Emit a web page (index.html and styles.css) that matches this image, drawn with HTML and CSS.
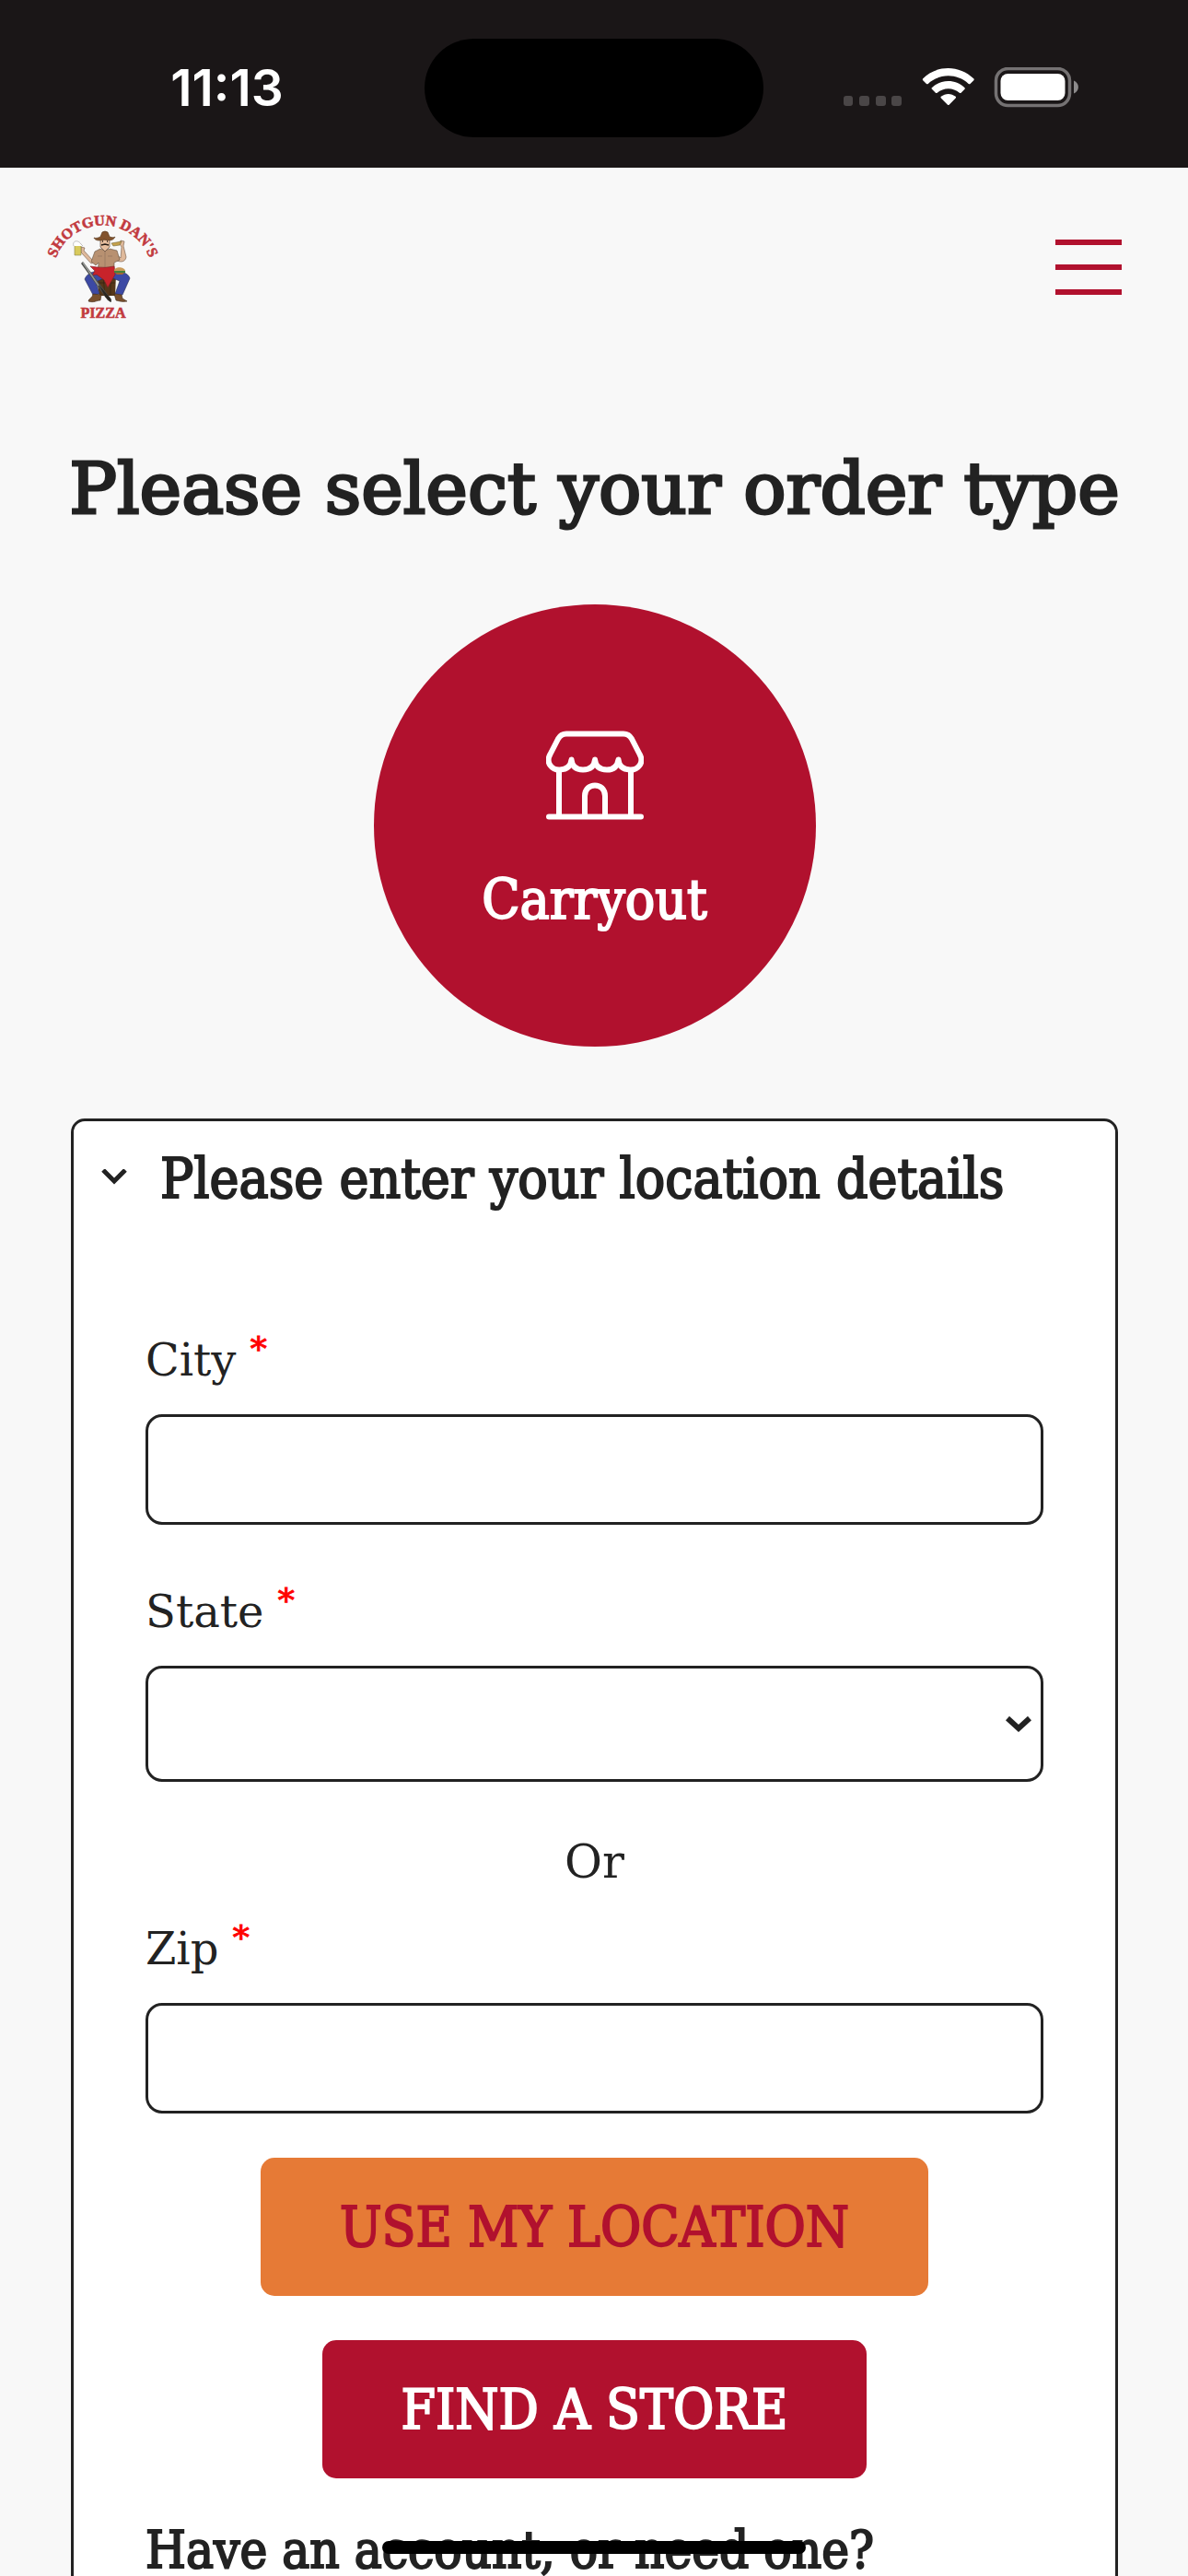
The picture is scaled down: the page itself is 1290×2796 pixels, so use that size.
FILE: index.html
```html
<!DOCTYPE html>
<html lang="en">
<head>
  <meta charset="UTF-8">
  <meta name="viewport" content="width=device-width, initial-scale=1.0">
  <title>Shotgun Dan's Pizza</title>
  <link rel="stylesheet" href="styles.css">
</head>
<body>
  <!-- Status bar -->
  <div class="status-bar">
    <span class="status-time">11:13</span>
    <span class="island"></span>
    <svg class="status-icons" width="256" height="44" viewBox="0 0 256 44" aria-hidden="true">
      <g fill="#4a4647">
        <rect x="0" y="31" width="10" height="11" rx="3"/>
        <rect x="17" y="31" width="11" height="11" rx="3"/>
        <rect x="35" y="31" width="11" height="11" rx="3"/>
        <rect x="52" y="31" width="11" height="11" rx="3"/>
      </g>
      <g fill="#fff">
        <path d="M86 12.500C101 -3 126 -3 141.500 12.500Q142 13.500 141.300 14.200L137.500 18Q136.600 18.600 135.700 17.900C123 6.500 104.500 6.500 91.800 17.900Q90.900 18.600 90 18L86.200 14.200Q85.500 13.500 86 12.500Z"/>
        <path d="M95.800 22.200C106 12.500 121.500 12.500 131.500 22.200Q132.200 23 131.500 23.800L127.600 27.700Q126.700 28.400 125.800 27.700C119 21.600 108.500 21.600 101.700 27.700Q100.800 28.400 99.900 27.700L96 23.800Q95.200 23 95.800 22.200Z"/>
        <path d="M105.800 31.800C110.500 27.900 117 27.900 121.700 31.800Q122.500 32.600 121.700 33.400L114.600 40.700Q113.800 41.400 113 40.700L105.800 33.400Q105 32.600 105.800 31.800Z"/>
      </g>
      <rect x="165.500" y="1.500" width="80" height="40" rx="13" fill="none" stroke="#757273" stroke-width="3.500"/>
      <rect x="170.500" y="7" width="70" height="29" rx="8" fill="#fff"/>
      <path d="M250 14.500C256.500 17 256.500 26 250 28.500Z" fill="#8c8a8b"/>
    </svg>
  </div>

  <!-- Site header -->
  <header class="site-header">
    <a class="logo" href="#" aria-label="Shotgun Dan's Pizza">
      <svg width="160" height="160" viewBox="0 0 160 160" stroke-width="0.6">
        <path id="logo-arc" d="M29.500 74A54 54 0 0 1 133.500 74" fill="none"/>
        <text class="logo-text" text-anchor="middle"><textPath href="#logo-arc" startOffset="50%">SHOTGUN DAN'S</textPath></text>
        <!-- barrel -->
        <path d="M74 88h22l-1 23H78z" fill="#553719"/>
        <path d="M82 90l2 21M90 90v21M75 97h20" stroke="#302010" fill="none"/>
        <!-- legs and boots -->
        <path d="M77 84c-9 1-13 4-15 9l9 17 7-1-4-13 11-5z" fill="#3c49a4" stroke="#272b50"/>
        <path d="M91 86c11-2 18 0 20 6l-8 18-8-1 5-14-10-4z" fill="#3c49a4" stroke="#272b50"/>
        <path d="M71 109l9 1-1 6c-4 0-7 3-13 1 0-3 5-4 5-8z" fill="#79502d" stroke="#3d2818"/>
        <path d="M94 109l8 1 1 4 5 3c-5 1-8 0-12-1z" fill="#79502d" stroke="#3d2818"/>
        <!-- arms -->
        <path d="M73 66l-2 7-10-11 1-3-4-1v6l11 12 8-3z" fill="#dfb99b" stroke="#6e5747"/>
        <path d="M96 66l5 4 1-12-2-3 1-4 4 1-1 5 3 12c-1 6-7 6-12 3z" fill="#dfb99b" stroke="#6e5747"/>
        <!-- shirt -->
        <path d="M79 60l-6 3-4 11 5 4 3-3-1 14h18V75l6-3-3-10-8-2-5 2z" fill="#b89171" stroke="#63503e"/>
        <path d="M84 62v25M76 68h5M87 68h5" stroke="#8c705a" fill="none"/>
        <!-- bandana and burger -->
        <path d="M68 79l8 1q8 1 18-1l1 9-8 14-4-8-8-6-5 1 3-5z" fill="#c8232b" stroke="#7b2027"/>
        <path d="M94 84c0-5 11-5 12 0z" fill="#c99a58"/>
        <path d="M94 85h12" stroke="#44813b" stroke-width="2"/>
        <path d="M95 86h10l-2 2h-6z" fill="#a3672f"/>
        <!-- head -->
        <path d="M79 50h10v8l-5 5-5-5z" fill="#e7bf9f" stroke="#483325"/>
        <path d="M80 56l4-1 4 1M81 52h1M86 52h1" stroke="#251d17" stroke-width="1.400" fill="none"/>
        <path d="M72 48c2 1 5 0 7-1l2-5q3-2 6 0l2 5c3 1 5 1 6 0-2 5-8 4-12 3-5 2-10 1-11-2z" fill="#82532d" stroke="#533318"/>
        <!-- shotgun -->
        <path d="M58 76l2-2 31 41v3l-4-2z" fill="#4b4c4a"/>
        <path d="M60 75l17 25" stroke="#949693" stroke-width="1.500"/>
        <path d="M78 100l12 14v4l-6-6z" fill="#2c2820"/>
        <!-- beer and pizza slice -->
        <path d="M51 56h7v11h-7z" fill="#d8ca5c" stroke="#87804b"/>
        <path d="M50 57c-2-6 5-7 8-2l2 2" fill="#fff" stroke="#999"/>
        <path d="M91 54l11-2-2 4-7 1z" fill="#c5a14b" stroke="#766d42"/>
        <text class="logo-text" x="82" y="135" text-anchor="middle">PIZZA</text>
      </svg>
    </a>
    <button class="menu-button" type="button" aria-label="Menu">
      <span></span>
      <span></span>
      <span></span>
    </button>
  </header>

  <!-- Order type -->
  <main>
    <h1>Please select your order type</h1>

    <button class="order-type" type="button">
      <svg width="106" height="97" viewBox="0 0 106 97" fill="none" stroke="#fff" stroke-width="6" stroke-linecap="round" stroke-linejoin="round" aria-hidden="true">
        <path d="M22 3.500H84Q90 3.500 93 9L101.500 25.500C107 35 99.500 43 91 42.500Q79.500 42 78.500 31.500Q77 42.500 66 42.500Q54 42.500 53 31.500Q52 42.500 40 42.500Q28.500 42.500 27.500 31.500Q26.500 42 15 42.500C6.500 43 -1 35 4.500 25.500L13 9Q16 3.500 22 3.500Z"/>
        <path d="M3 93.500H103M14 43V93M92 43V93M42 93V71C42 55.500 64 55.500 64 71V93"/>
      </svg>
      <span>Carryout</span>
    </button>

    <!-- Location form -->
    <section class="card">
      <h2>
        <svg width="28" height="20" viewBox="0 0 28 20" fill="none" stroke="#222" stroke-width="5" aria-hidden="true"><path d="M2 1L14 13L26 1"/></svg>
        Please enter your location details
      </h2>
      <form>
        <div class="field">
          <label for="city">City <span class="required">*</span></label>
          <input id="city" type="text" required>
        </div>
        <div class="field">
          <label for="state">State <span class="required">*</span></label>
          <div class="select-wrap">
            <select id="state" required>
              <option value=""></option>
              <option value="AR">Arkansas</option>
            </select>
            <svg width="28" height="20" viewBox="0 0 28 20" fill="none" stroke="#222" stroke-width="6" aria-hidden="true"><path d="M2 3L14 14L26 3"/></svg>
          </div>
        </div>
        <p class="or">Or</p>
        <div class="field">
          <label for="zip">Zip <span class="required">*</span></label>
          <input id="zip" type="text" required>
        </div>
        <div class="actions">
          <button class="btn btn-location" type="button">USE MY LOCATION</button>
          <button class="btn btn-find" type="submit">FIND A STORE</button>
        </div>
        <h3>Have an account, or need one?</h3>
      </form>
    </section>
  </main>

  <div class="home-indicator"></div>
</body>
</html>
```
FILE: styles.css
```css
* {
  box-sizing: border-box;
}

body {
  font-family: 'DejaVu Serif', serif;
  margin: 0;
  display: flex;
  flex-direction: column;
  height: 100vh;
  background-color: #f8f8f8;
  color: #222;
  overflow: hidden;
}

button,
input,
select {
  font-family: inherit;
  color: inherit;
}

/* Status bar */
.status-bar {
  flex: none;
  display: grid;
  grid-template-columns: 1fr 368px 1fr;
  align-items: center;
  justify-items: center;
  height: 182px;
  padding-top: 8px;
  background-color: #1a1617;
}

.status-time {
  padding-left: 32px;
  font-family: Inter, sans-serif;
  font-size: 55px;
  font-weight: 600;
  color: #fff;
}

.island {
  width: 368px;
  height: 107px;
  border-radius: 54px;
  background-color: #000;
}

.status-icons {
  margin-right: 32px;
}

/* Header */
.site-header {
  flex: none;
  display: flex;
  justify-content: space-between;
  align-items: center;
  padding: 28px 72px 28px 30px;
}

.logo svg {
  display: block;
}

.logo-text {
  font-family: 'Liberation Serif', serif;
  font-size: 16px;
  font-weight: bold;
  fill: #c23a3f;
  stroke: #c23a3f;
}

.menu-button {
  display: flex;
  flex-direction: column;
  gap: 21px;
  padding: 0;
  background: none;
  border: none;
  cursor: pointer;
}

.menu-button span {
  width: 72px;
  height: 6px;
  background-color: #b1112e;
}

/* Order type */
main {
  flex: 1;
  min-height: 0;
  display: flex;
  flex-direction: column;
  align-items: center;
  padding: 85px 76px 0 77px;
}

h1,
h2,
h3,
.order-type,
.btn {
  font-weight: normal;
  -webkit-text-stroke: 2px currentColor;
}

h2,
h3,
.order-type,
.btn {
  font-family: 'DejaVu Serif Condensed', 'DejaVu Serif', serif;
}

h1 {
  margin: 0 0 77px;
  font-size: 77px;
  line-height: 96px;
  white-space: nowrap;
  -webkit-text-stroke-width: 3px;
}

.order-type {
  flex: none;
  display: flex;
  flex-direction: column;
  align-items: center;
  justify-content: center;
  gap: 54px;
  width: 480px;
  height: 480px;
  margin-bottom: 78px;
  padding: 8px 0 0;
  border: none;
  border-radius: 50%;
  background-color: #b1112e;
  color: #fff;
  font-size: 60px;
  line-height: 64px;
  cursor: pointer;
}

/* Location form */
.card {
  flex: none;
  width: 100%;
  padding: 30px 30px 120px;
  background-color: #fff;
  border: 3px solid #222;
  border-radius: 15px;
}

h2 {
  display: flex;
  align-items: center;
  gap: 36px;
  margin: 0 0 135px;
  font-size: 60px;
  line-height: 64px;
  white-space: nowrap;
}

form {
  padding: 0 48px;
}

.field {
  display: flex;
  flex-direction: column;
  gap: 29px;
}

.field + .field {
  margin-top: 64px;
}

label {
  font-size: 48px;
  line-height: 60px;
}

.required {
  color: #f00;
  font-size: 36px;
  line-height: 0;
  vertical-align: 16px;
  -webkit-text-stroke: 1px currentColor;
}

input,
select {
  width: 100%;
  height: 120px;
  padding: 0 30px;
  border: 3px solid #222;
  border-radius: 18px;
  background-color: #fff;
  font-size: 48px;
}

select {
  display: block;
  height: 126px;
  appearance: none;
}

.select-wrap {
  position: relative;
}

.select-wrap svg {
  position: absolute;
  top: 54px;
  right: 13px;
  pointer-events: none;
}

.or {
  margin: 57px 0 34px;
  font-size: 50px;
  line-height: 60px;
  text-align: center;
}

.actions {
  display: flex;
  flex-direction: column;
  align-items: center;
  gap: 48px;
  margin: 48px 0;
}

.btn {
  height: 150px;
  padding: 0 86px;
  border: none;
  border-radius: 15px;
  font-size: 60px;
  cursor: pointer;
}

.btn-location {
  background-color: #e67a36;
  color: #b1112e;
}

.btn-find {
  background-color: #b1112e;
  color: #fff;
}

h3 {
  margin: 0;
  font-size: 56px;
  line-height: 60px;
}

/* Home indicator */
.home-indicator {
  position: fixed;
  bottom: 24px;
  left: 50%;
  width: 460px;
  height: 14px;
  margin-left: -230px;
  border-radius: 7px;
  background-color: #000;
}
```
